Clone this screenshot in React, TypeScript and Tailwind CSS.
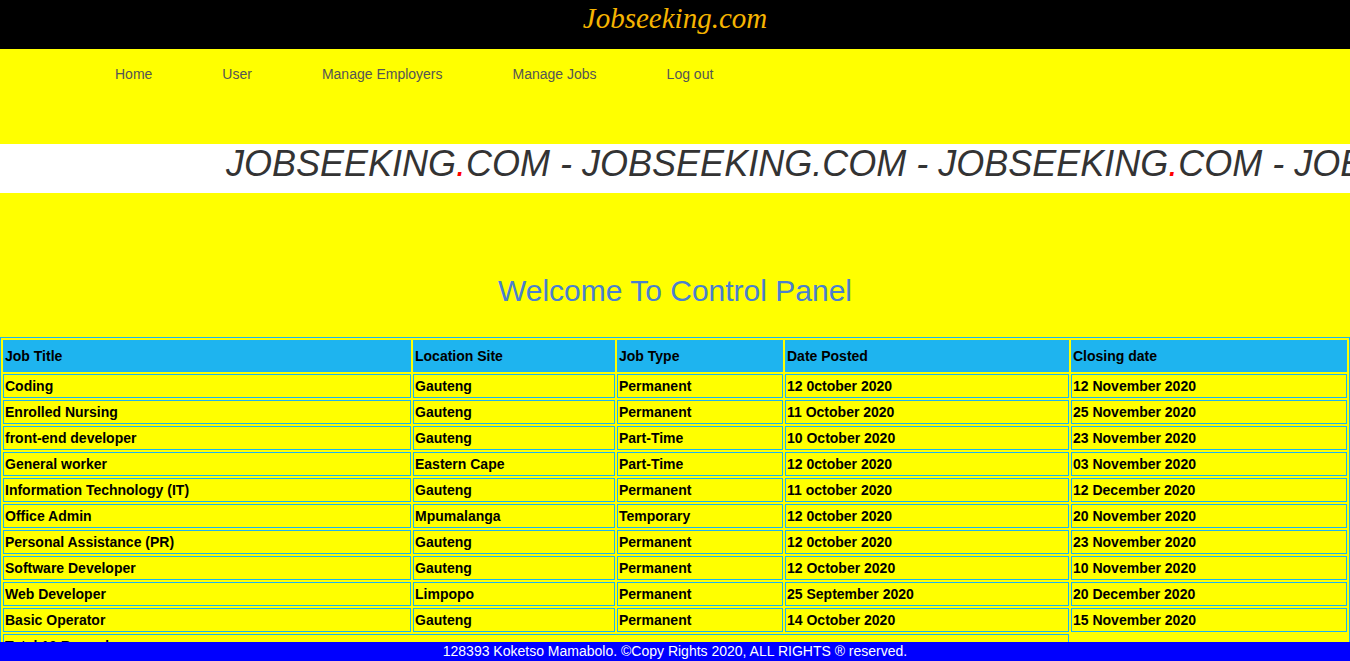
import React from "react";

const rows: string[][] = [
  ["Coding", "Gauteng", "Permanent", "12 0ctober 2020", "12 November 2020"],
  ["Enrolled Nursing", "Gauteng", "Permanent", "11 October 2020", "25 November 2020"],
  ["front-end developer", "Gauteng", "Part-Time", "10 October 2020", "23 November 2020"],
  ["General worker", "Eastern Cape", "Part-Time", "12 0ctober 2020", "03 November 2020"],
  ["Information Technology (IT)", "Gauteng", "Permanent", "11 october 2020", "12 December 2020"],
  ["Office Admin", "Mpumalanga", "Temporary", "12 0ctober 2020", "20 November 2020"],
  ["Personal Assistance (PR)", "Gauteng", "Permanent", "12 0ctober 2020", "23 November 2020"],
  ["Software Developer", "Gauteng", "Permanent", "12 October 2020", "10 November 2020"],
  ["Web Developer", "Limpopo", "Permanent", "25 September 2020", "20 December 2020"],
  ["Basic Operator", "Gauteng", "Permanent", "14 October 2020", "15 November 2020"],
];

const navItems = ["Home", "User", "Manage Employers", "Manage Jobs", "Log out"];

function Brand({ red }: { red: boolean }) {
  return (
    <span>
      JOBSEEKING<span className={red ? "text-[#ff0000]" : ""}>.</span>COM
    </span>
  );
}

export default function App() {
  return (
    <div className="min-h-screen bg-[#ffff00] font-['Liberation_Sans',Arial,sans-serif] pb-[40px]">
      <header className="h-[49px] bg-black text-center pt-[4px]">
        <span className="font-['Liberation_Serif','Times_New_Roman',serif] italic text-[29px] leading-none text-[#f5b400]">
          Jobseeking.com
        </span>
      </header>

      <nav className="h-[95px] pt-[17px]">
        <ul className="flex pl-[115px] gap-[70px] text-[14px] leading-[16px] text-[#555555]">
          {navItems.map((n) => (
            <li key={n}>
              <a href="#">{n}</a>
            </li>
          ))}
        </ul>
      </nav>

      <div className="h-[49px] bg-white overflow-hidden whitespace-nowrap">
        <div className="pl-[226px] italic text-[36px] leading-[36px] text-[#333333] pt-[2px]">
          <Brand red /> - <Brand red={false} /> - <Brand red /> - <Brand red={false} />
        </div>
      </div>

      <div className="h-[144px] pt-[81px] text-center">
        <h1 className="text-[30px] leading-[34px] text-[#4a7fcf] font-normal">
          Welcome To Control Panel
        </h1>
      </div>

      <table className="w-full table-fixed border border-[#1eb4ef] border-separate border-spacing-[2px] text-[14px] leading-[16px] font-bold text-black">
        <thead>
          <tr>
            {[
              ["Job Title", "w-[408px]"],
              ["Location Site", "w-[202px]"],
              ["Job Type", "w-[166px]"],
              ["Date Posted", "w-[284px]"],
              ["Closing date", "w-[276px]"],
            ].map(([t, w]) => (
              <th
                key={t}
                className={`${w} h-[32px] bg-[#1eb4ef] border border-[#1eb4ef] px-[1px] text-left font-bold`}
              >
                {t}
              </th>
            ))}
          </tr>
        </thead>
        <tbody>
          {rows.map((r) => (
            <tr key={r[0]}>
              {r.map((c, i) => (
                <td key={i} className="h-[24px] border border-[#1eb4ef] px-[1px]">
                  {c}
                </td>
              ))}
            </tr>
          ))}
          <tr>
            <td colSpan={4} className="h-[24px] border border-[#1eb4ef] px-[1px]">
              Total 10 Records
            </td>
          </tr>
        </tbody>
      </table>

      <footer className="fixed bottom-0 left-0 w-full h-[19px] bg-[#0000ff] text-white text-center text-[14px] leading-[19px]">
        128393 Koketso Mamabolo. ©Copy Rights 2020, ALL RIGHTS ® reserved.
      </footer>
    </div>
  );
}
